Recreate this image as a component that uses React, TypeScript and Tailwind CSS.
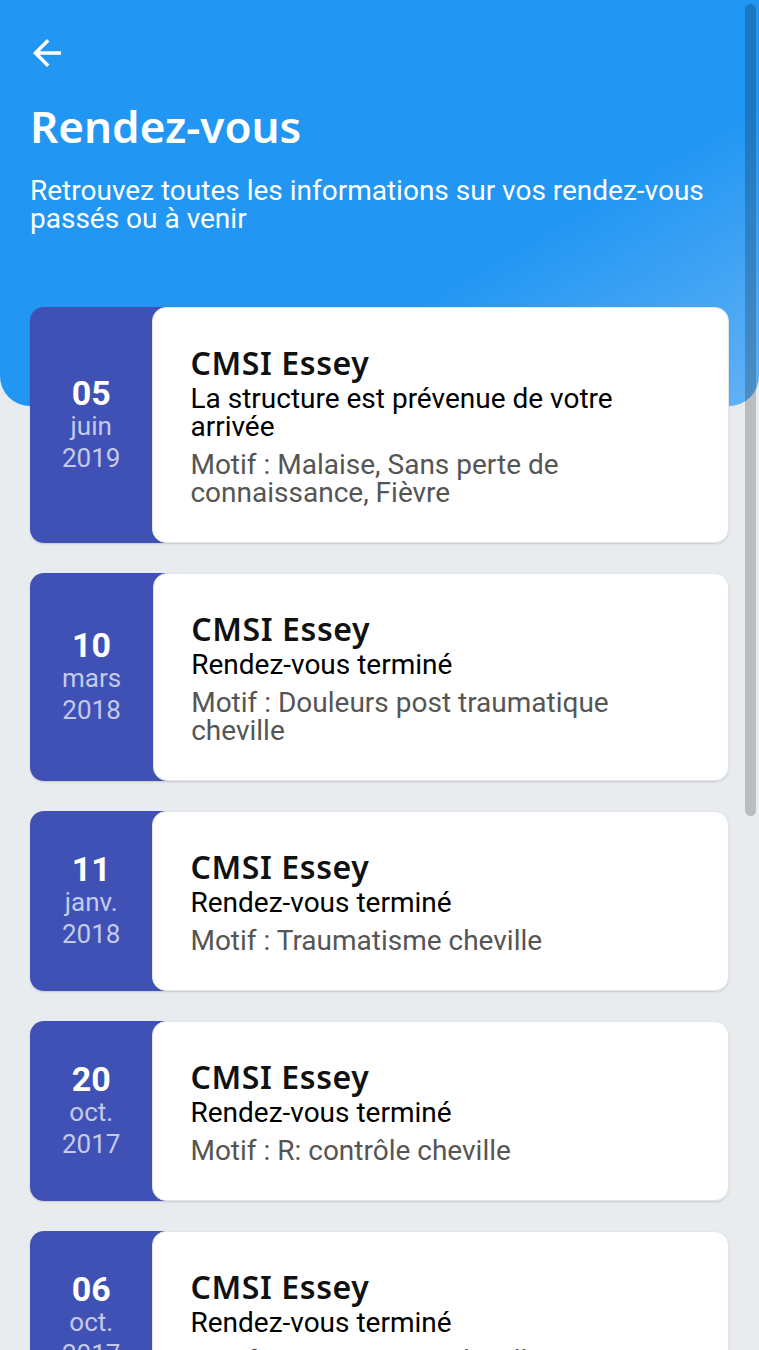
type Rdv = {
  day: string;
  month: string;
  year: string;
  status: string;
  motif: string;
};

const rdvs: Rdv[] = [
  {
    day: '05',
    month: 'juin',
    year: '2019',
    status: 'La structure est prévenue de votre arrivée',
    motif: 'Motif : Malaise, Sans perte de connaissance, Fièvre',
  },
  {
    day: '10',
    month: 'mars',
    year: '2018',
    status: 'Rendez-vous terminé',
    motif: 'Motif : Douleurs post traumatique cheville',
  },
  {
    day: '11',
    month: 'janv.',
    year: '2018',
    status: 'Rendez-vous terminé',
    motif: 'Motif : Traumatisme cheville',
  },
  {
    day: '20',
    month: 'oct.',
    year: '2017',
    status: 'Rendez-vous terminé',
    motif: 'Motif : R: contrôle cheville',
  },
  {
    day: '06',
    month: 'oct.',
    year: '2017',
    status: 'Rendez-vous terminé',
    motif: 'Motif : Traumatisme cheville',
  },
];

const RdvCard = ({ rdv }: { rdv: Rdv }) => (
  <div className="flex rounded-[14px] shadow-[0_1px_2px_rgba(0,0,0,0.15)]">
    <div className="-mr-[14px] flex flex-col items-center justify-center rounded-l-[14px] bg-[#3f51b5] pl-[32px] pr-[46px] text-[26px] leading-[32px] text-[#c5cae9]">
      <span className="text-[34px] font-bold leading-[34px] text-white">{rdv.day}</span>
      <span>{rdv.month}</span>
      <span>{rdv.year}</span>
    </div>
    <div className="relative flex-1 rounded-[14px] border border-[#e3e5e8] bg-white pb-[35px] pl-[37px] pr-[39px] pt-[36px]">
      <p className="font-['Noto_Sans',sans-serif] text-[32px] font-semibold leading-[37px] tracking-[0.6px] text-[#111]">
        CMSI Essey
      </p>
      <p className="mt-[4px] text-[28px] leading-[28px] text-black">{rdv.status}</p>
      <p className="mt-[10px] text-[28px] leading-[28px] text-[#555]">{rdv.motif}</p>
    </div>
  </div>
);

export default function App() {
  return (
    <div className="relative h-[1350px] overflow-hidden bg-[#e9ecef] font-['Roboto',sans-serif]">
      <header className="h-[406px] rounded-b-[30px] bg-[linear-gradient(150deg,#2196f3_64%,#62b2f6_100%)] px-[30px] pt-[32px] text-white">
        <svg width="42" height="42" viewBox="0 0 24 24" className="-ml-[4px]" fill="white">
          <path d="M20 11H7.83l5.59-5.59L12 4l-8 8 8 8 1.41-1.41L7.83 13H20v-2z" />
        </svg>
        <h1 className="mt-[25px] font-['Noto_Sans',sans-serif] text-[44px] font-semibold leading-[54px]">Rendez-vous</h1>
        <p className="mt-[24px] text-[28px] leading-[28px]">
          Retrouvez toutes les informations sur vos rendez-vous passés ou à venir
        </p>
      </header>

      <div className="relative -mt-[99px] flex flex-col gap-[30px] px-[30px]">
        {rdvs.map((rdv, i) => (
          <RdvCard key={i} rdv={rdv} />
        ))}
      </div>

      <div className="absolute right-[3px] top-[4px] h-[812px] w-[11px] rounded-full bg-black/20" />
    </div>
  );
}
